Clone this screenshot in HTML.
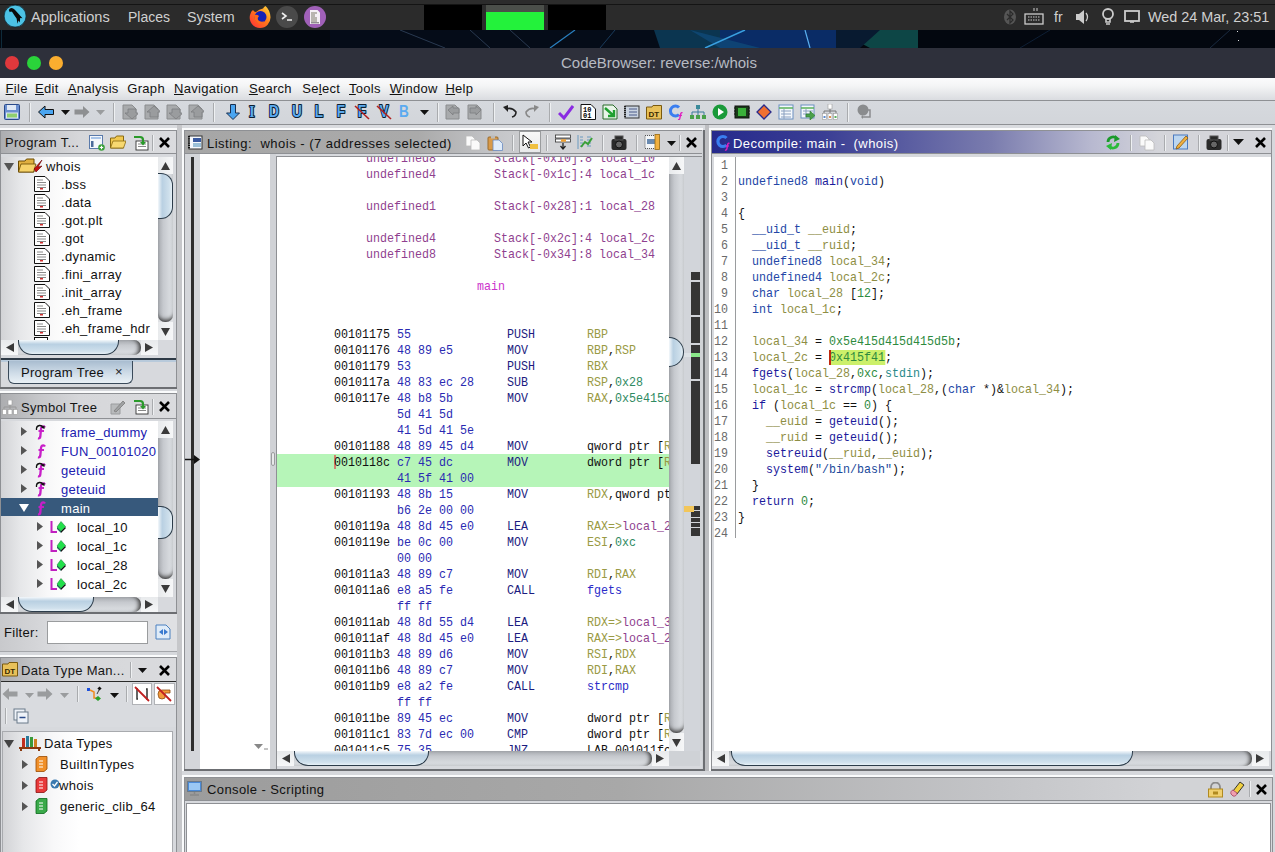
<!DOCTYPE html><html><head><meta charset="utf-8"><style>
*{margin:0;padding:0;box-sizing:border-box}
html,body{width:1275px;height:852px;overflow:hidden;background:#d6d8dc;font-family:"Liberation Sans",sans-serif}
div{position:absolute}
.t{white-space:pre;line-height:16px}
.ui{font-size:13px;letter-spacing:0.3px;color:#000}
.m{font-family:"Liberation Mono",monospace;font-size:13.3px;white-space:pre;line-height:16px;transform:scaleX(0.877);transform-origin:0 0}
.mr{transform-origin:100% 0}
svg{position:absolute}
</style></head><body><div style="left:0px;top:0px;width:1275px;height:4px;background:#2c2c2c"></div>
<div style="left:0px;top:4px;width:1275px;height:1px;background:#141414"></div>
<div style="left:0px;top:5px;width:1275px;height:25px;background:#2b2b2b"></div>
<svg style="left:3px;top:4px" width="24" height="24" viewBox="0 0 24 24"><circle cx="12.1" cy="12.1" r="11" fill="#4cc2e4" stroke="#0e2a36" stroke-width="0.8"/><path d="M5.8 6 Q7 3.6 9.5 4.2 Q11 4.6 12.5 6.5 L19.5 14.2 L17.2 14 L16.8 18.5 L15.5 16.5 L14.5 19.8 L13.6 14.5 Q11 11 9.2 8 Q8 7 6.8 8.2Z" fill="#0a0a0a"/></svg>
<div class="t" style="left:31px;top:9px;font-size:14.6px;color:#d0d0d0;line-height:16px">Applications</div>
<div class="t" style="left:128px;top:9px;font-size:14px;color:#d0d0d0;line-height:16px">Places</div>
<div class="t" style="left:187px;top:9px;font-size:14.3px;color:#d0d0d0;line-height:16px">System</div>
<svg style="left:248px;top:5px" width="24" height="24" viewBox="0 0 24 24"><defs><linearGradient id="ff" x1="0" y1="1" x2="1" y2="0"><stop offset="0" stop-color="#ff2a3a"/><stop offset="0.55" stop-color="#ff7a1a"/><stop offset="1" stop-color="#ffe040"/></linearGradient></defs><path d="M12 23 A10.5 10.5 0 0 1 2 10 Q3 6 5 5 Q6 7 8 7 Q11 4 15 3.5 Q16 1.5 17.5 1 Q22 5 22.5 12 A10.5 10.5 0 0 1 12 23Z" fill="url(#ff)"/><circle cx="12.5" cy="12" r="6" fill="#1420b8"/><path d="M6 10 Q9 9 11 11 Q9 13 10 15 Q13 18 17 16 Q14 20 10 18 Q6 16 6 10Z" fill="#ff6a1a"/></svg>
<svg style="left:275px;top:5px" width="24" height="24" viewBox="0 0 24 24"><circle cx="12" cy="12" r="11" fill="#4a4a4a"/><path d="M7 8 L11 11 L7 14" stroke="#eee" stroke-width="1.6" fill="none"/><path d="M12 15 H17" stroke="#eee" stroke-width="1.5"/></svg>
<svg style="left:303px;top:5px" width="24" height="24" viewBox="0 0 24 24"><circle cx="12" cy="12" r="11" fill="#a060b8"/><path d="M7 5H14.5L17 7.5V19H7Z" fill="#f4eef6"/><rect x="8" y="7" width="6" height="10" fill="#b8b4b0"/><rect x="12" y="9" width="3" height="3" fill="#f4eef6"/><path d="M8 17.8H16" stroke="#555" stroke-width="0.9"/></svg>
<div style="left:424px;top:5px;width:58px;height:25px;background:#000"></div>
<div style="left:486px;top:5px;width:58px;height:7px;background:#4b4f4a"></div>
<div style="left:486px;top:12px;width:58px;height:18px;background:#23f23b"></div>
<div style="left:548px;top:5px;width:58px;height:25px;background:#000"></div>
<svg style="left:1003px;top:9px" width="14" height="16" viewBox="0 0 14 16"><ellipse cx="7" cy="8" rx="6" ry="7.5" fill="#555"/><path d="M4 5 L10 11 L7 14 V2 L10 5 L4 11" stroke="#2b2b2b" stroke-width="1.2" fill="none"/></svg>
<svg style="left:1024px;top:8px" width="20" height="18" viewBox="0 0 20 18"><path d="M10 0 V3 M13 0 V3" stroke="#ccc"/><rect x="1" y="6" width="18" height="10" fill="none" stroke="#ccc" stroke-width="1.3"/><path d="M4 9H16M4 12H16" stroke="#ccc" stroke-dasharray="1.5 1"/></svg>
<div class="t" style="left:1054px;top:9px;font-size:14px;color:#d0d0d0;line-height:16px">fr</div>
<svg style="left:1075px;top:9px" width="16" height="16" viewBox="0 0 16 16"><path d="M1 5H4L9 1V15L4 11H1Z" fill="#ccc"/><path d="M11 4 Q14 8 11 12" stroke="#ccc" stroke-width="1.3" fill="none"/></svg>
<svg style="left:1101px;top:8px" width="14" height="18" viewBox="0 0 14 18"><circle cx="7" cy="6" r="5" fill="none" stroke="#ccc" stroke-width="1.8"/><path d="M5 11 V14 H9 V11 M5 16 H9" stroke="#ccc" stroke-width="1.6" fill="none"/></svg>
<svg style="left:1124px;top:9px" width="16" height="16" viewBox="0 0 16 16"><rect x="1" y="2" width="14" height="10" fill="none" stroke="#ccc" stroke-width="1.8"/><path d="M6 13 H10" stroke="#ccc" stroke-width="1.6"/></svg>
<div class="t" style="left:1148px;top:9px;font-size:14.4px;color:#d0d0d0;line-height:16px">Wed 24 Mar, 23:51</div>
<div style="left:0px;top:30px;width:1275px;height:18px;background:#040b16"></div>
<svg style="left:0;top:30px" width="1275" height="18" viewBox="0 0 1275 18">
<rect x="0" y="0" width="1275" height="18" fill="#03070f"/>
<rect x="330" y="0" width="330" height="18" fill="#050c18"/>
<path d="M400 0 L445 18 M470 0 L490 18 M510 0 L530 18" stroke="#2a3a50" stroke-width="1"/>
<path d="M550 18 L575 0" stroke="#2a80c0" stroke-width="1.2"/>
<path d="M600 18 L615 0" stroke="#1a3a5a" stroke-width="1"/>
<polygon points="654,0 720,0 720,18 660,18" fill="#0b3550"/>
<polygon points="720,0 836,0 836,18 720,18" fill="#0a2c66"/>
<polygon points="690,0 760,18 720,18" fill="#0f4a78" opacity="0.8"/>
<path d="M705 18 L745 0" stroke="#3aa0e0" stroke-width="1.5"/>
<path d="M805 0 L810 18" stroke="#5ab0f0" stroke-width="1.2"/>
<polygon points="836,0 918,0 918,18 870,18" fill="#0d4646"/>
<polygon points="836,0 880,0 860,18 836,18" fill="#081a30"/>
<rect x="1" y="0" width="1" height="18" fill="#0e2a3a"/>
<path d="M1210 18 L1230 0" stroke="#1a2a40" stroke-width="1"/>
<path d="M1020 18 L1050 0" stroke="#0e1e34" stroke-width="1"/>
</svg>
<div style="left:1237px;top:31px;width:1px;height:1px;background:#ddd"></div>
<div style="left:1238px;top:40px;width:1px;height:1px;background:#ddd"></div>
<div style="left:0px;top:48px;width:1275px;height:30px;background:#2e303b"></div>
<svg style="left:0;top:48px" width="80" height="29" viewBox="0 0 80 29"><circle cx="12" cy="15" r="7" fill="#e0383c"/><circle cx="34" cy="15" r="7" fill="#2ad33a"/><circle cx="56" cy="15" r="7" fill="#fbae2f"/></svg>
<div class="t" style="left:561px;top:55px;font-size:15px;color:#b6bac2;line-height:16px">CodeBrowser: reverse:/whois</div>
<div style="left:0px;top:78px;width:1275px;height:22px;background:linear-gradient(#fbfbfc,#f4f5f6 35%,#dadce0)"></div>
<div style="left:0px;top:100px;width:1275px;height:1px;background:#8e9094"></div>
<div class="t" style="left:5.6px;top:81px;font-size:13px;letter-spacing:0.3px;color:#111;line-height:16px"><u>F</u>ile</div>
<div class="t" style="left:35px;top:81px;font-size:13px;letter-spacing:0.3px;color:#111;line-height:16px"><u>E</u>dit</div>
<div class="t" style="left:67.8px;top:81px;font-size:13px;letter-spacing:0.3px;color:#111;line-height:16px"><u>A</u>nalysis</div>
<div class="t" style="left:127.3px;top:81px;font-size:13px;letter-spacing:0.3px;color:#111;line-height:16px">Graph</div>
<div class="t" style="left:174px;top:81px;font-size:13px;letter-spacing:0.3px;color:#111;line-height:16px"><u>N</u>avigation</div>
<div class="t" style="left:248.9px;top:81px;font-size:13px;letter-spacing:0.3px;color:#111;line-height:16px"><u>S</u>earch</div>
<div class="t" style="left:302.3px;top:81px;font-size:13px;letter-spacing:0.3px;color:#111;line-height:16px">Se<u>l</u>ect</div>
<div class="t" style="left:349px;top:81px;font-size:13px;letter-spacing:0.3px;color:#111;line-height:16px"><u>T</u>ools</div>
<div class="t" style="left:389.7px;top:81px;font-size:13px;letter-spacing:0.3px;color:#111;line-height:16px"><u>W</u>indow</div>
<div class="t" style="left:445.4px;top:81px;font-size:13px;letter-spacing:0.3px;color:#111;line-height:16px"><u>H</u>elp</div>
<div style="left:0px;top:101px;width:1275px;height:23px;background:linear-gradient(#d6d9de,#d2d5da)"></div>
<div style="left:0px;top:124px;width:1275px;height:1px;background:#8e9094"></div>
<div style="left:0px;top:125px;width:1275px;height:5px;background:#d9dbdf"></div>
<svg style="left:4px;top:104px" width="16" height="16" viewBox="0 0 16 16"><rect x="0.5" y="0.5" width="15" height="15" rx="1" fill="#6a8fd0" stroke="#2a4a8a"/><rect x="3" y="1" width="9" height="5" fill="#dfe8f5"/><rect x="2.5" y="9" width="11" height="5" fill="#8fcf6f" stroke="#dfe8f5"/></svg>
<div style="left:29px;top:103px;width:1px;height:19px;background:#a9abae"></div>
<div style="left:30px;top:103px;width:1px;height:19px;background:#eef0f2"></div>
<svg style="left:38px;top:104px" width="16" height="16" viewBox="0 0 16 16"><path d="M0.5 8 L7 2 V5.5 H15.5 V10.5 H7 V14Z" fill="#4aa5f0" stroke="#111" stroke-width="1"/></svg>
<svg style="left:61px;top:110px" width="9" height="5" viewBox="0 0 9 5"><path d="M0 0H9L4.5 5Z" fill="#111"/></svg>
<svg style="left:74px;top:104px" width="16" height="16" viewBox="0 0 16 16"><path d="M15.5 8 L9 2 V5.5 H0.5 V10.5 H9 V14Z" fill="#8e9092"/></svg>
<svg style="left:96px;top:110px" width="9" height="5" viewBox="0 0 9 5"><path d="M0 0H9L4.5 5Z" fill="#9a9c9e"/></svg>
<div style="left:113px;top:103px;width:1px;height:19px;background:#a9abae"></div>
<div style="left:114px;top:103px;width:1px;height:19px;background:#eef0f2"></div>
<svg style="left:122px;top:104px" width="16" height="16" viewBox="0 0 16 16"><path d="M1 1H10L14 5V15H1Z" fill="#a8aaac" stroke="#8a8c8e"/><path d="M8 15 L15 9 H12 V5 H4 V9 H1Z" fill="#9a9c9e" stroke="#7c7e80" stroke-width="0.8" transform="translate(2,0)"/></svg>
<svg style="left:144px;top:104px" width="16" height="16" viewBox="0 0 16 16"><path d="M1 1H10L14 5V15H1Z" fill="#a8aaac" stroke="#8a8c8e"/><path d="M8 2 L15 8 H12 V13 H4 V8 H1Z" fill="#9a9c9e" stroke="#7c7e80" stroke-width="0.8" transform="translate(2,0)"/></svg>
<svg style="left:166px;top:104px" width="16" height="16" viewBox="0 0 16 16"><path d="M1 1H10L14 5V15H1Z" fill="#a8aaac" stroke="#8a8c8e"/><path d="M8 15 L15 9 H12 V5 H4 V9 H1Z" fill="#9a9c9e" stroke="#7c7e80" stroke-width="0.8" transform="translate(2,0)"/></svg>
<svg style="left:188px;top:104px" width="16" height="16" viewBox="0 0 16 16"><path d="M1 1H10L14 5V15H1Z" fill="#a8aaac" stroke="#8a8c8e"/><path d="M8 2 L15 8 H12 V13 H4 V8 H1Z" fill="#9a9c9e" stroke="#7c7e80" stroke-width="0.8" transform="translate(2,0)"/></svg>
<div style="left:213px;top:103px;width:1px;height:19px;background:#a9abae"></div>
<div style="left:214px;top:103px;width:1px;height:19px;background:#eef0f2"></div>
<svg style="left:225px;top:104px" width="16" height="16" viewBox="0 0 16 16"><path d="M5.5 0.5H10.5V9H14.5L8 15.5L1.5 9H5.5Z" fill="#4aa5f0" stroke="#1a3050" stroke-width="1"/></svg>
<svg style="left:244px;top:103px" width="16" height="18" viewBox="0 0 16 18"><g transform="translate(8 0) scale(0.85 1)"><text x="0" y="14.5" text-anchor="middle" font-family="Liberation Serif" font-weight="bold" font-size="16" fill="#5aaaf0" stroke="#0e1e30" stroke-width="2.2" paint-order="stroke" stroke-linejoin="round">I</text></g></svg>
<svg style="left:266px;top:103px" width="16" height="18" viewBox="0 0 16 18"><g transform="translate(8 0) scale(0.85 1)"><text x="0" y="14.5" text-anchor="middle" font-family="Liberation Sans" font-weight="bold" font-size="16" fill="#5aaaf0" stroke="#0e1e30" stroke-width="2.2" paint-order="stroke" stroke-linejoin="round">D</text></g></svg>
<svg style="left:289px;top:103px" width="16" height="18" viewBox="0 0 16 18"><g transform="translate(8 0) scale(0.85 1)"><text x="0" y="14.5" text-anchor="middle" font-family="Liberation Sans" font-weight="bold" font-size="16" fill="#5aaaf0" stroke="#0e1e30" stroke-width="2.2" paint-order="stroke" stroke-linejoin="round">U</text></g></svg>
<svg style="left:311px;top:103px" width="16" height="18" viewBox="0 0 16 18"><g transform="translate(8 0) scale(0.85 1)"><text x="0" y="14.5" text-anchor="middle" font-family="Liberation Sans" font-weight="bold" font-size="16" fill="#5aaaf0" stroke="#0e1e30" stroke-width="2.2" paint-order="stroke" stroke-linejoin="round">L</text></g></svg>
<svg style="left:333px;top:103px" width="16" height="18" viewBox="0 0 16 18"><g transform="translate(8 0) scale(0.85 1)"><text x="0" y="14.5" text-anchor="middle" font-family="Liberation Sans" font-weight="bold" font-size="16" fill="#5aaaf0" stroke="#0e1e30" stroke-width="2.2" paint-order="stroke" stroke-linejoin="round">F</text></g></svg>
<svg style="left:354px;top:103px" width="16" height="18" viewBox="0 0 16 18"><g transform="translate(8 0) scale(0.85 1)"><text x="0" y="14.5" text-anchor="middle" font-family="Liberation Sans" font-weight="bold" font-size="16" fill="#5aaaf0" stroke="#0e1e30" stroke-width="2.2" paint-order="stroke" stroke-linejoin="round">F</text></g></svg>
<svg style="left:376px;top:103px" width="16" height="18" viewBox="0 0 16 18"><g transform="translate(8 0) scale(0.85 1)"><text x="0" y="14.5" text-anchor="middle" font-family="Liberation Sans" font-weight="bold" font-size="16" fill="#5aaaf0" stroke="#0e1e30" stroke-width="2.2" paint-order="stroke" stroke-linejoin="round">V</text></g></svg>
<svg style="left:354px;top:104px" width="16" height="16" viewBox="0 0 16 16"><path d="M1 2 L15 15" stroke="#b02020" stroke-width="1.6"/></svg>
<svg style="left:376px;top:104px" width="16" height="16" viewBox="0 0 16 16"><path d="M1 2 L15 15" stroke="#b02020" stroke-width="1.6"/></svg>
<svg style="left:396px;top:103px" width="16" height="18" viewBox="0 0 16 18"><g transform="translate(8 0) scale(0.85 1)"><text x="0" y="14.5" text-anchor="middle" font-family="Liberation Sans" font-weight="bold" font-size="16" fill="#5aaaf0" >B</text></g></svg>
<svg style="left:420px;top:110px" width="9" height="5" viewBox="0 0 9 5"><path d="M0 0H9L4.5 5Z" fill="#111"/></svg>
<div style="left:437px;top:103px;width:1px;height:19px;background:#a9abae"></div>
<div style="left:438px;top:103px;width:1px;height:19px;background:#eef0f2"></div>
<svg style="left:445px;top:104px" width="16" height="16" viewBox="0 0 16 16"><path d="M1 1H10L14 5V15H1Z" fill="#a8aaac" stroke="#8a8c8e"/><path d="M3 6 L8 2 V4 H14 V9 H8 V11Z" fill="#9a9c9e" stroke="#7c7e80" stroke-width="0.8"/></svg>
<svg style="left:467px;top:104px" width="16" height="16" viewBox="0 0 16 16"><path d="M1 1H10L14 5V15H1Z" fill="#a8aaac" stroke="#8a8c8e"/><path d="M14 6 L9 2 V4 H3 V9 H9 V11Z" fill="#9a9c9e" stroke="#7c7e80" stroke-width="0.8"/></svg>
<div style="left:493px;top:103px;width:1px;height:19px;background:#a9abae"></div>
<div style="left:494px;top:103px;width:1px;height:19px;background:#eef0f2"></div>
<svg style="left:502px;top:104px" width="16" height="16" viewBox="0 0 16 16"><path d="M4 5 Q10 3 14 8 Q14 12 10 13" stroke="#222" stroke-width="1.6" fill="none"/><path d="M1 3 L6 1 L6 8Z" fill="#222"/></svg>
<svg style="left:524px;top:104px" width="16" height="16" viewBox="0 0 16 16"><path d="M12 5 Q6 3 2 8 Q2 12 6 13" stroke="#888" stroke-width="1.6" fill="none"/><path d="M15 3 L10 1 L10 8Z" fill="#888"/></svg>
<div style="left:549px;top:103px;width:1px;height:19px;background:#a9abae"></div>
<div style="left:550px;top:103px;width:1px;height:19px;background:#eef0f2"></div>
<svg style="left:558px;top:104px" width="16" height="16" viewBox="0 0 16 16"><path d="M1 9 L6 14 L15 2" stroke="#8a2be2" stroke-width="3" fill="none"/></svg>
<svg style="left:580px;top:104px" width="16" height="16" viewBox="0 0 16 16"><path d="M1 0.5H11L15.5 5V15.5H1Z" fill="#fff" stroke="#111"/><text x="3" y="8" font-size="7" font-family="Liberation Mono" font-weight="bold">10</text><text x="3" y="14" font-size="7" font-family="Liberation Mono" font-weight="bold">01</text></svg>
<svg style="left:602px;top:104px" width="16" height="16" viewBox="0 0 16 16"><path d="M1 1H11L15 5V15H1Z" fill="#e8f4e8" stroke="#2a6a2a"/><path d="M3 4 L12 12 M12 6 V12 H6" stroke="#1fa02f" stroke-width="2.4" fill="none"/></svg>
<svg style="left:624px;top:104px" width="16" height="16" viewBox="0 0 16 16"><rect x="1" y="2" width="14" height="12" fill="#c9d3e0" stroke="#333"/><path d="M1 2V14" stroke="#222" stroke-width="2" stroke-dasharray="1 1"/><path d="M5 5H13M5 8H13M5 11H13" stroke="#4a5a8a"/></svg>
<svg style="left:646px;top:104px" width="16" height="16" viewBox="0 0 16 16"><path d="M0.5 3H6L7 1.5H15.5V15H0.5Z" fill="#e8c15a" stroke="#7a5a10"/><text x="2.5" y="12.5" font-size="8" font-family="Liberation Sans" font-weight="bold" fill="#3a2a00">DT</text></svg>
<svg style="left:668px;top:104px" width="16" height="16" viewBox="0 0 16 16"><path d="M11 3.5 A5 5 0 1 0 11 10.5" stroke="#3a7ef0" stroke-width="3" fill="none"/><path d="M14.5 9 Q13.5 8 12.8 9.5 L11.8 14.5 Q11.3 16 10 15.5" stroke="#e020c0" stroke-width="1.4" fill="none"/><path d="M10.5 11.5H14" stroke="#e020c0" stroke-width="1.1"/></svg>
<svg style="left:690px;top:104px" width="16" height="16" viewBox="0 0 16 16"><rect x="6" y="1" width="4" height="4" fill="#3a8a9a"/><path d="M8 5V8M2 8H14M2 8V11M8 8V11M14 8V11" stroke="#3a7a9a"/><rect x="0" y="11" width="4" height="4" fill="#4aa04a"/><rect x="6" y="11" width="4" height="4" fill="#4aa04a"/><rect x="12" y="11" width="4" height="4" fill="#4aa04a"/></svg>
<svg style="left:712px;top:104px" width="16" height="16" viewBox="0 0 16 16"><circle cx="8" cy="8" r="7.5" fill="#1a9a3a"/><path d="M6 4 L12 8 L6 12Z" fill="#fff"/></svg>
<svg style="left:734px;top:104px" width="16" height="16" viewBox="0 0 16 16"><rect x="1" y="2" width="14" height="12" fill="#1a3a1a" stroke="#111"/><rect x="4" y="4" width="8" height="8" fill="#3ab03a"/><path d="M1 4H0M1 7H0M1 10H0M15 4H16M15 7H16M15 10H16" stroke="#111"/></svg>
<svg style="left:756px;top:104px" width="16" height="16" viewBox="0 0 16 16"><path d="M8 1 L15 8 L8 15 L1 8Z" fill="#f07030" stroke="#2a2a8a" stroke-width="1.3"/></svg>
<svg style="left:778px;top:104px" width="16" height="16" viewBox="0 0 16 16"><rect x="1" y="1" width="14" height="14" fill="#f4f8fc" stroke="#6a8fc0"/><path d="M1 4H15" stroke="#5ab05a" stroke-width="1.5"/><path d="M3 7H13M3 10H13M3 13H13M6 5V15" stroke="#8aa0c0"/></svg>
<svg style="left:800px;top:104px" width="16" height="16" viewBox="0 0 16 16"><rect x="1" y="1" width="13" height="13" fill="#f4f8fc" stroke="#6a8fc0"/><path d="M1 4H14" stroke="#5ab05a" stroke-width="1.5"/><path d="M3 7H13M3 10H13M6 5V14" stroke="#8aa0c0"/><path d="M6 10H10V7L15 11.5L10 16V13H6Z" fill="#4aa04a" stroke="#2a7a2a" stroke-width="0.6"/></svg>
<svg style="left:822px;top:104px" width="16" height="16" viewBox="0 0 16 16"><rect x="6" y="0" width="4" height="5" fill="#fff" stroke="#999" stroke-width="0.6"/><path d="M8 5V7M2 7H14M2 7V9M8 7V9M14 7V9" stroke="#777"/><rect x="0.5" y="9.5" width="4" height="6" fill="#fff" stroke="#999" stroke-width="0.6"/><rect x="6" y="9.5" width="4" height="6" fill="#fff" stroke="#999" stroke-width="0.6"/><rect x="11.5" y="9.5" width="4" height="6" fill="#fff" stroke="#999" stroke-width="0.6"/><rect x="1.5" y="12" width="2" height="2" fill="#5a8ad0"/><rect x="7" y="12" width="2" height="2" fill="#e09050"/><rect x="12.5" y="12" width="2" height="2" fill="#5ab05a"/></svg>
<div style="left:847px;top:103px;width:1px;height:19px;background:#a9abae"></div>
<div style="left:848px;top:103px;width:1px;height:19px;background:#eef0f2"></div>
<svg style="left:856px;top:104px" width="16" height="16" viewBox="0 0 16 16"><circle cx="7" cy="6" r="5.5" fill="#8a8c8e"/><path d="M11 6H14V13H6" stroke="#8a8c8e" stroke-width="1.5" fill="none"/><path d="M7 11L5 13L7 15" fill="#8a8c8e"/></svg>
<div style="left:177px;top:125px;width:5px;height:727px;background:#c6c7ca"></div>
<div style="left:705px;top:125px;width:4px;height:646px;background:#bdbec1"></div>
<div style="left:-2px;top:128px;width:179px;height:2px;background:#fafbfc"></div>
<div style="left:0px;top:130px;width:177px;height:258px;background:#d7d9dd;border:1px solid #8e9094"></div>
<div style="left:1px;top:131px;width:175px;height:22px;background:linear-gradient(90deg,#acadb0,#c6c7ca 22%,#d6d7da 45%,#dadbde)"></div>
<div style="left:1px;top:153px;width:175px;height:1px;background:#8e9094"></div>
<div class="t" style="left:5px;top:135px;font-size:13px;letter-spacing:0.3px;color:#151515">Program T...</div>
<svg style="left:89px;top:135px" width="16" height="16" viewBox="0 0 16 16"><rect x="0.5" y="0.5" width="13" height="13" fill="#f4f7fb" stroke="#5a7aaa"/><rect x="2" y="2" width="10" height="2" fill="#a8c4e8"/><rect x="2" y="6" width="2.5" height="6" fill="#4a6a9a"/><circle cx="12.5" cy="12.5" r="3.3" fill="#3aa03a"/><path d="M10.8 12.5H14.2M12.5 10.8V14.2" stroke="#fff" stroke-width="1.2"/></svg>
<svg style="left:110px;top:135px" width="16" height="16" viewBox="0 0 16 16"><path d="M0.5 3H5L6.5 1H13.5V13H0.5Z" fill="#f0c850" stroke="#8a6a10"/><path d="M0.5 13L3 6H16L13.5 13Z" fill="#f7d870" stroke="#8a6a10" stroke-width="0.8"/></svg>
<svg style="left:133px;top:135px" width="16" height="16" viewBox="0 0 16 16"><rect x="3" y="6" width="12" height="9" fill="#fff" stroke="#333" stroke-width="0.9"/><path d="M5 9H13M5 11.5H13" stroke="#555" stroke-width="0.7"/><path d="M1 2 H7 Q10 2 10 5 V8" stroke="#2a9a2a" stroke-width="2.2" fill="none"/><path d="M7 7 L10 10.5 L13 7Z" fill="#2a9a2a"/></svg>
<div style="left:152px;top:135px;width:1px;height:16px;background:#a9abae"></div>
<div style="left:153px;top:135px;width:1px;height:16px;background:#eef0f2"></div>
<svg style="left:159px;top:137px" width="11" height="11" viewBox="0 0 11 11"><path d="M1 1L10 10M10 1L1 10" stroke="#000" stroke-width="2.6" stroke-linecap="butt"/></svg>
<div style="left:1px;top:154px;width:175px;height:3px;background:#d7d9dd"></div>
<div style="left:1px;top:157px;width:157px;height:183px;background:linear-gradient(90deg,#d2d3d6,#e6e7e9 12%,#f8f8f9 30%,#fff 45%)"></div>
<div style="left:158px;top:157px;width:15px;height:183px;background:#dfe1e4"></div>
<div style="left:158px;top:172px;width:15px;height:150px;background:linear-gradient(90deg,#a6a9ae,#c6c9ce 35%,#d6d9dd 75%,#d2d5d9);border-radius:0 0 7px 7px;box-shadow:inset 0 -5px 4px -3px #3a3a3a"></div>
<div style="left:158px;top:157px;width:15px;height:17px;background:linear-gradient(90deg,#e8eaec,#f6f7f8)"></div>
<svg style="left:161px;top:162px" width="9" height="8" viewBox="0 0 9 8"><path d="M0 8H9L4.5 0Z" fill="#3a3a3a"/></svg>
<div style="left:158px;top:322px;width:15px;height:18px;background:linear-gradient(90deg,#e8eaec,#f6f7f8)"></div>
<svg style="left:161px;top:328px" width="9" height="8" viewBox="0 0 9 8"><path d="M0 0H9L4.5 8Z" fill="#3a3a3a"/></svg>
<div style="left:158px;top:173px;width:15px;height:46px;background:linear-gradient(90deg,#f4f8fb,#b9d0e2 30%,#cfe0ec 80%,#e6f0f6);border:1.5px solid #2c3c4a;border-left:none;border-radius:0 12px 12px 0"></div>
<svg style="left:18px;top:157px" width="25" height="16" viewBox="0 0 25 16"><path d="M0.5 4H7L8.5 2H16V15H0.5Z" fill="#e0b040" stroke="#6a4a00"/><path d="M0.5 15L3 7H18L15.5 15Z" fill="#f6d36a" stroke="#6a4a00" stroke-width="0.8"/><path d="M16 12 L24 3 L20 10 L24 9 L18 15Z" fill="#c01010" stroke="#600" stroke-width="0.6"/></svg>
<svg style="left:4px;top:163px" width="10" height="8" viewBox="0 0 10 8"><path d="M0 0H10L5 8Z" fill="#555"/></svg>
<div class="t" style="left:46px;top:159px;font-size:13px;letter-spacing:0.3px;color:#111">whois</div>
<svg style="left:34px;top:176px" width="16" height="16" viewBox="0 0 16 16"><path d="M0.5 0.5H11L15.5 5V15.5H0.5Z" fill="#fff" stroke="#111"/><path d="M3 4H9M3 6.5H12M3 9H12M3 11.5H12" stroke="#8a8a8a" stroke-width="1"/><rect x="6" y="12" width="3" height="1.5" fill="#d03030"/></svg>
<div class="t" style="left:61px;top:177px;font-size:13px;letter-spacing:0.35px;color:#111">.bss</div>
<svg style="left:34px;top:194px" width="16" height="16" viewBox="0 0 16 16"><path d="M0.5 0.5H11L15.5 5V15.5H0.5Z" fill="#fff" stroke="#111"/><path d="M3 4H9M3 6.5H12M3 9H12M3 11.5H12" stroke="#8a8a8a" stroke-width="1"/><rect x="6" y="12" width="3" height="1.5" fill="#d03030"/></svg>
<div class="t" style="left:61px;top:195px;font-size:13px;letter-spacing:0.35px;color:#111">.data</div>
<svg style="left:34px;top:212px" width="16" height="16" viewBox="0 0 16 16"><path d="M0.5 0.5H11L15.5 5V15.5H0.5Z" fill="#fff" stroke="#111"/><path d="M3 4H9M3 6.5H12M3 9H12M3 11.5H12" stroke="#8a8a8a" stroke-width="1"/><rect x="6" y="12" width="3" height="1.5" fill="#d03030"/></svg>
<div class="t" style="left:61px;top:213px;font-size:13px;letter-spacing:0.35px;color:#111">.got.plt</div>
<svg style="left:34px;top:230px" width="16" height="16" viewBox="0 0 16 16"><path d="M0.5 0.5H11L15.5 5V15.5H0.5Z" fill="#fff" stroke="#111"/><path d="M3 4H9M3 6.5H12M3 9H12M3 11.5H12" stroke="#8a8a8a" stroke-width="1"/><rect x="6" y="12" width="3" height="1.5" fill="#d03030"/></svg>
<div class="t" style="left:61px;top:231px;font-size:13px;letter-spacing:0.35px;color:#111">.got</div>
<svg style="left:34px;top:248px" width="16" height="16" viewBox="0 0 16 16"><path d="M0.5 0.5H11L15.5 5V15.5H0.5Z" fill="#fff" stroke="#111"/><path d="M3 4H9M3 6.5H12M3 9H12M3 11.5H12" stroke="#8a8a8a" stroke-width="1"/><rect x="6" y="12" width="3" height="1.5" fill="#d03030"/></svg>
<div class="t" style="left:61px;top:249px;font-size:13px;letter-spacing:0.35px;color:#111">.dynamic</div>
<svg style="left:34px;top:266px" width="16" height="16" viewBox="0 0 16 16"><path d="M0.5 0.5H11L15.5 5V15.5H0.5Z" fill="#fff" stroke="#111"/><path d="M3 4H9M3 6.5H12M3 9H12M3 11.5H12" stroke="#8a8a8a" stroke-width="1"/><rect x="6" y="12" width="3" height="1.5" fill="#d03030"/></svg>
<div class="t" style="left:61px;top:267px;font-size:13px;letter-spacing:0.35px;color:#111">.fini_array</div>
<svg style="left:34px;top:284px" width="16" height="16" viewBox="0 0 16 16"><path d="M0.5 0.5H11L15.5 5V15.5H0.5Z" fill="#fff" stroke="#111"/><path d="M3 4H9M3 6.5H12M3 9H12M3 11.5H12" stroke="#8a8a8a" stroke-width="1"/><rect x="6" y="12" width="3" height="1.5" fill="#d03030"/></svg>
<div class="t" style="left:61px;top:285px;font-size:13px;letter-spacing:0.35px;color:#111">.init_array</div>
<svg style="left:34px;top:302px" width="16" height="16" viewBox="0 0 16 16"><path d="M0.5 0.5H11L15.5 5V15.5H0.5Z" fill="#fff" stroke="#111"/><path d="M3 4H9M3 6.5H12M3 9H12M3 11.5H12" stroke="#8a8a8a" stroke-width="1"/><rect x="6" y="12" width="3" height="1.5" fill="#d03030"/></svg>
<div class="t" style="left:61px;top:303px;font-size:13px;letter-spacing:0.35px;color:#111">.eh_frame</div>
<svg style="left:34px;top:320px" width="16" height="16" viewBox="0 0 16 16"><path d="M0.5 0.5H11L15.5 5V15.5H0.5Z" fill="#fff" stroke="#111"/><path d="M3 4H9M3 6.5H12M3 9H12M3 11.5H12" stroke="#8a8a8a" stroke-width="1"/><rect x="6" y="12" width="3" height="1.5" fill="#d03030"/></svg>
<div class="t" style="left:61px;top:321px;font-size:13px;letter-spacing:0.35px;color:#111">.eh_frame_hdr</div>
<div style="left:34px;top:337px;width:14px;height:3px;background:#fff;border:1px solid #111;border-bottom:none"></div>
<div style="left:1px;top:340px;width:157px;height:0px;"></div>
<div style="left:1px;top:340px;width:157px;height:15px;background:#dfe1e4"></div>
<div style="left:18px;top:340px;width:123px;height:15px;background:linear-gradient(#a6a9ae,#c6c9ce 35%,#d6d9dd 75%,#d2d5d9);border-radius:0 7px 7px 0;box-shadow:inset -5px 0 4px -3px #3a3a3a"></div>
<div style="left:1px;top:340px;width:17px;height:15px;background:linear-gradient(#e8eaec,#f6f7f8)"></div>
<svg style="left:6px;top:343px" width="8" height="9" viewBox="0 0 8 9"><path d="M8 0V9L0 4.5Z" fill="#3a3a3a"/></svg>
<div style="left:141px;top:340px;width:17px;height:15px;background:linear-gradient(#e8eaec,#f6f7f8)"></div>
<svg style="left:145px;top:343px" width="8" height="9" viewBox="0 0 8 9"><path d="M0 0V9L8 4.5Z" fill="#3a3a3a"/></svg>
<div style="left:18px;top:340px;width:101px;height:15px;background:linear-gradient(#f4f8fb,#b9d0e2 30%,#cfe0ec 80%,#e6f0f6);border:1.5px solid #2c3c4a;border-top:none;border-radius:0 0 14px 14px"></div>
<div style="left:158px;top:340px;width:15px;height:15px;background:#d7d9dd"></div>
<div style="left:1px;top:355px;width:175px;height:33px;background:#d7d9dd"></div>
<div style="left:0px;top:387px;width:177px;height:2px;background:#6c6e72"></div>
<div style="left:1px;top:358px;width:175px;height:2px;background:#2e3a46"></div>
<div style="left:1px;top:360px;width:175px;height:2px;background:#b8cadb"></div>
<div style="left:8px;top:361px;width:125px;height:23px;background:linear-gradient(#a9bdd0,#cfdce8 55%,#eaf1f6);border:1px solid #3a4a5a;border-top:none;border-radius:0 0 6px 6px"></div>
<div class="t" style="left:21px;top:365px;font-size:13px;letter-spacing:0.3px;color:#111">Program Tree</div>
<div class="t" style="left:115px;top:364px;font-size:13px;color:#222">×</div>
<div style="left:-2px;top:391px;width:179px;height:2px;background:#fafbfc"></div>
<div style="left:0px;top:393px;width:177px;height:221px;background:#d7d9dd;border:1px solid #8e9094"></div>
<div style="left:1px;top:394px;width:175px;height:24px;background:linear-gradient(90deg,#acadb0,#c6c7ca 22%,#d6d7da 45%,#dadbde)"></div>
<div style="left:1px;top:418px;width:175px;height:1px;background:#8e9094"></div>
<svg style="left:2px;top:400px" width="16" height="16" viewBox="0 0 16 16"><rect x="6" y="0" width="4" height="5" fill="#fff" stroke="#999" stroke-width="0.6"/><path d="M8 5V7M2 7H14M2 7V9M8 7V9M14 7V9" stroke="#999"/><rect x="0.5" y="9.5" width="4" height="5" fill="#fff" stroke="#999" stroke-width="0.6"/><rect x="6" y="9.5" width="4" height="5" fill="#fff" stroke="#999" stroke-width="0.6"/><rect x="11.5" y="9.5" width="4" height="5" fill="#fff" stroke="#999" stroke-width="0.6"/></svg>
<div class="t" style="left:21px;top:400px;font-size:13px;letter-spacing:0.3px;color:#151515">Symbol Tree</div>
<svg style="left:110px;top:399px" width="16" height="16" viewBox="0 0 16 16"><path d="M1 5H10V15H1Z" fill="#b8babc" stroke="#9a9c9e"/><path d="M4 12 L13 2 L15 4 L6 13Z" fill="#a0a2a4" stroke="#888"/></svg>
<svg style="left:133px;top:399px" width="16" height="16" viewBox="0 0 16 16"><rect x="3" y="6" width="12" height="9" fill="#fff" stroke="#333" stroke-width="0.9"/><path d="M5 9H13M5 11.5H13" stroke="#555" stroke-width="0.7"/><path d="M1 2 H7 Q10 2 10 5 V8" stroke="#2a9a2a" stroke-width="2.2" fill="none"/><path d="M7 7 L10 10.5 L13 7Z" fill="#2a9a2a"/></svg>
<div style="left:152px;top:399px;width:1px;height:16px;background:#a9abae"></div>
<div style="left:153px;top:399px;width:1px;height:16px;background:#eef0f2"></div>
<svg style="left:159px;top:401px" width="11" height="11" viewBox="0 0 11 11"><path d="M1 1L10 10M10 1L1 10" stroke="#000" stroke-width="2.6" stroke-linecap="butt"/></svg>
<div style="left:1px;top:419px;width:175px;height:2px;background:#d7d9dd"></div>
<div style="left:1px;top:421px;width:157px;height:176px;background:linear-gradient(90deg,#d2d3d6,#e6e7e9 12%,#f8f8f9 30%,#fff 45%)"></div>
<div style="left:158px;top:421px;width:15px;height:176px;background:#dfe1e4"></div>
<div style="left:158px;top:436px;width:15px;height:143px;background:linear-gradient(90deg,#a6a9ae,#c6c9ce 35%,#d6d9dd 75%,#d2d5d9);border-radius:0 0 7px 7px;box-shadow:inset 0 -5px 4px -3px #3a3a3a"></div>
<div style="left:158px;top:421px;width:15px;height:17px;background:linear-gradient(90deg,#e8eaec,#f6f7f8)"></div>
<svg style="left:161px;top:426px" width="9" height="8" viewBox="0 0 9 8"><path d="M0 8H9L4.5 0Z" fill="#3a3a3a"/></svg>
<div style="left:158px;top:579px;width:15px;height:18px;background:linear-gradient(90deg,#e8eaec,#f6f7f8)"></div>
<svg style="left:161px;top:585px" width="9" height="8" viewBox="0 0 9 8"><path d="M0 0H9L4.5 8Z" fill="#3a3a3a"/></svg>
<div style="left:158px;top:506px;width:15px;height:33px;background:linear-gradient(90deg,#f4f8fb,#b9d0e2 30%,#cfe0ec 80%,#e6f0f6);border:1.5px solid #2c3c4a;border-left:none;border-radius:0 12px 12px 0"></div>
<svg style="left:21px;top:427px" width="6" height="9" viewBox="0 0 6 9"><path d="M0 0V9L6 4.5Z" fill="#555"/></svg>
<svg style="left:34px;top:424px" width="14" height="16" viewBox="0 0 14 16"><path d="M11 3.5 Q10 1.8 8.3 2.6 Q7.2 3.2 7 5 L6.3 12.5 Q6 14.8 4 14.2" stroke="#c81ec8" stroke-width="2.3" fill="none"/><path d="M4.5 7H10" stroke="#c81ec8" stroke-width="1.9"/><path d="M2.5 6 Q2 2 5.5 1.5 Q8 1.3 9 3.5" stroke="#111" stroke-width="1.3" fill="none"/><path d="M7 3.5 L10.5 5 L10.5 1.5Z" fill="#111"/></svg>
<div class="t" style="left:61px;top:425px;font-size:13px;letter-spacing:0.3px;color:#2020b0">frame_dummy</div>
<svg style="left:21px;top:446px" width="6" height="9" viewBox="0 0 6 9"><path d="M0 0V9L6 4.5Z" fill="#555"/></svg>
<svg style="left:34px;top:443px" width="14" height="16" viewBox="0 0 14 16"><path d="M11 3.5 Q10 1.8 8.3 2.6 Q7.2 3.2 7 5 L6.3 12.5 Q6 14.8 4 14.2" stroke="#c81ec8" stroke-width="2.3" fill="none"/><path d="M4.5 7H10" stroke="#c81ec8" stroke-width="1.9"/></svg>
<div class="t" style="left:61px;top:444px;font-size:13px;letter-spacing:0.3px;color:#2020b0">FUN_00101020</div>
<svg style="left:21px;top:465px" width="6" height="9" viewBox="0 0 6 9"><path d="M0 0V9L6 4.5Z" fill="#555"/></svg>
<svg style="left:34px;top:462px" width="14" height="16" viewBox="0 0 14 16"><path d="M11 3.5 Q10 1.8 8.3 2.6 Q7.2 3.2 7 5 L6.3 12.5 Q6 14.8 4 14.2" stroke="#c81ec8" stroke-width="2.3" fill="none"/><path d="M4.5 7H10" stroke="#c81ec8" stroke-width="1.9"/><path d="M2.5 6 Q2 2 5.5 1.5 Q8 1.3 9 3.5" stroke="#111" stroke-width="1.3" fill="none"/><path d="M7 3.5 L10.5 5 L10.5 1.5Z" fill="#111"/></svg>
<div class="t" style="left:61px;top:463px;font-size:13px;letter-spacing:0.3px;color:#2020b0">geteuid</div>
<svg style="left:21px;top:484px" width="6" height="9" viewBox="0 0 6 9"><path d="M0 0V9L6 4.5Z" fill="#555"/></svg>
<svg style="left:34px;top:481px" width="14" height="16" viewBox="0 0 14 16"><path d="M11 3.5 Q10 1.8 8.3 2.6 Q7.2 3.2 7 5 L6.3 12.5 Q6 14.8 4 14.2" stroke="#c81ec8" stroke-width="2.3" fill="none"/><path d="M4.5 7H10" stroke="#c81ec8" stroke-width="1.9"/><path d="M2.5 6 Q2 2 5.5 1.5 Q8 1.3 9 3.5" stroke="#111" stroke-width="1.3" fill="none"/><path d="M7 3.5 L10.5 5 L10.5 1.5Z" fill="#111"/></svg>
<div class="t" style="left:61px;top:482px;font-size:13px;letter-spacing:0.3px;color:#2020b0">geteuid</div>
<div style="left:1px;top:498px;width:157px;height:18px;background:#37597c"></div>
<svg style="left:19px;top:504px" width="10" height="8" viewBox="0 0 10 8"><path d="M0 0H10L5 8Z" fill="#fff"/></svg>
<svg style="left:34px;top:500px" width="14" height="16" viewBox="0 0 14 16"><path d="M11 3.5 Q10 1.8 8.3 2.6 Q7.2 3.2 7 5 L6.3 12.5 Q6 14.8 4 14.2" stroke="#c81ec8" stroke-width="2.3" fill="none"/><path d="M4.5 7H10" stroke="#c81ec8" stroke-width="1.9"/></svg>
<div class="t" style="left:61px;top:501px;font-size:13px;letter-spacing:0.3px;color:#fff">main</div>
<svg style="left:37px;top:522px" width="6" height="9" viewBox="0 0 6 9"><path d="M0 0V9L6 4.5Z" fill="#555"/></svg>
<svg style="left:50px;top:519px" width="16" height="16" viewBox="0 0 16 16"><path d="M1.5 2V13H7" stroke="#c020c0" stroke-width="2" fill="none"/><path d="M7 8 L7 10 L11 14 L11 12Z" fill="#1a6a5a"/><path d="M15.5 7.5 L15.5 9.5 L11 14 L11 12Z" fill="#111"/><path d="M11 2.5 L15.5 7.5 L11 12 L7 8Z" fill="#22e04a" stroke="#117733" stroke-width="0.5"/></svg>
<div class="t" style="left:77px;top:520px;font-size:13px;letter-spacing:0.3px;color:#111">local_10</div>
<svg style="left:37px;top:541px" width="6" height="9" viewBox="0 0 6 9"><path d="M0 0V9L6 4.5Z" fill="#555"/></svg>
<svg style="left:50px;top:538px" width="16" height="16" viewBox="0 0 16 16"><path d="M1.5 2V13H7" stroke="#c020c0" stroke-width="2" fill="none"/><path d="M7 8 L7 10 L11 14 L11 12Z" fill="#1a6a5a"/><path d="M15.5 7.5 L15.5 9.5 L11 14 L11 12Z" fill="#111"/><path d="M11 2.5 L15.5 7.5 L11 12 L7 8Z" fill="#22e04a" stroke="#117733" stroke-width="0.5"/></svg>
<div class="t" style="left:77px;top:539px;font-size:13px;letter-spacing:0.3px;color:#111">local_1c</div>
<svg style="left:37px;top:560px" width="6" height="9" viewBox="0 0 6 9"><path d="M0 0V9L6 4.5Z" fill="#555"/></svg>
<svg style="left:50px;top:557px" width="16" height="16" viewBox="0 0 16 16"><path d="M1.5 2V13H7" stroke="#c020c0" stroke-width="2" fill="none"/><path d="M7 8 L7 10 L11 14 L11 12Z" fill="#1a6a5a"/><path d="M15.5 7.5 L15.5 9.5 L11 14 L11 12Z" fill="#111"/><path d="M11 2.5 L15.5 7.5 L11 12 L7 8Z" fill="#22e04a" stroke="#117733" stroke-width="0.5"/></svg>
<div class="t" style="left:77px;top:558px;font-size:13px;letter-spacing:0.3px;color:#111">local_28</div>
<svg style="left:37px;top:579px" width="6" height="9" viewBox="0 0 6 9"><path d="M0 0V9L6 4.5Z" fill="#555"/></svg>
<svg style="left:50px;top:576px" width="16" height="16" viewBox="0 0 16 16"><path d="M1.5 2V13H7" stroke="#c020c0" stroke-width="2" fill="none"/><path d="M7 8 L7 10 L11 14 L11 12Z" fill="#1a6a5a"/><path d="M15.5 7.5 L15.5 9.5 L11 14 L11 12Z" fill="#111"/><path d="M11 2.5 L15.5 7.5 L11 12 L7 8Z" fill="#22e04a" stroke="#117733" stroke-width="0.5"/></svg>
<div class="t" style="left:77px;top:577px;font-size:13px;letter-spacing:0.3px;color:#111">local_2c</div>
<div style="left:1px;top:597px;width:157px;height:15px;background:#dfe1e4"></div>
<div style="left:18px;top:597px;width:123px;height:15px;background:linear-gradient(#a6a9ae,#c6c9ce 35%,#d6d9dd 75%,#d2d5d9);border-radius:0 7px 7px 0;box-shadow:inset -5px 0 4px -3px #3a3a3a"></div>
<div style="left:1px;top:597px;width:17px;height:15px;background:linear-gradient(#e8eaec,#f6f7f8)"></div>
<svg style="left:6px;top:600px" width="8" height="9" viewBox="0 0 8 9"><path d="M8 0V9L0 4.5Z" fill="#3a3a3a"/></svg>
<div style="left:141px;top:597px;width:17px;height:15px;background:linear-gradient(#e8eaec,#f6f7f8)"></div>
<svg style="left:145px;top:600px" width="8" height="9" viewBox="0 0 8 9"><path d="M0 0V9L8 4.5Z" fill="#3a3a3a"/></svg>
<div style="left:18px;top:597px;width:76px;height:15px;background:linear-gradient(#f4f8fb,#b9d0e2 30%,#cfe0ec 80%,#e6f0f6);border:1.5px solid #2c3c4a;border-top:none;border-radius:0 0 14px 14px"></div>
<div style="left:158px;top:597px;width:15px;height:15px;background:#d7d9dd"></div>
<div style="left:0px;top:612px;width:177px;height:2px;background:#6c6e72"></div>
<div style="left:0px;top:614px;width:177px;height:38px;background:linear-gradient(90deg,#c8c9cc,#dfe0e3 40%)"></div>
<div style="left:0px;top:651px;width:177px;height:1px;background:#a4a6aa"></div>
<div class="t" style="left:4px;top:625px;font-size:13px;letter-spacing:0.3px;color:#111">Filter:</div>
<div style="left:47px;top:621px;width:101px;height:23px;background:#fff;border:1px solid #9a9c9e"></div>
<svg style="left:155px;top:624px" width="16" height="16" viewBox="0 0 16 16"><path d="M1 1H11L15 5V15H1Z" fill="#e0ecf8" stroke="#4a80c0"/><path d="M4 8L8 5V11Z M9 5L13 8L9 11" fill="#3a7ad0"/></svg>
<div style="left:-2px;top:655px;width:179px;height:2px;background:#fafbfc"></div>
<div style="left:0px;top:657px;width:177px;height:200px;background:#d7d9dd;border:1px solid #8e9094"></div>
<div style="left:1px;top:658px;width:175px;height:23px;background:linear-gradient(90deg,#acadb0,#c6c7ca 22%,#d6d7da 45%,#dadbde)"></div>
<div style="left:1px;top:681px;width:175px;height:1px;background:#8e9094"></div>
<div style="left:1px;top:681px;width:175px;height:1px;background:#2a2a2a"></div>
<svg style="left:2px;top:661px" width="16" height="16" viewBox="0 0 16 16"><path d="M0.5 3H6L7 1.5H15.5V15H0.5Z" fill="#e8c15a" stroke="#7a5a10"/><text x="2.5" y="12.5" font-size="8" font-family="Liberation Sans" font-weight="bold" fill="#3a2a00">DT</text></svg>
<div class="t" style="left:21px;top:663px;font-size:13px;letter-spacing:0.3px;color:#151515">Data Type Man...</div>
<div style="left:130px;top:662px;width:1px;height:16px;background:#a9abae"></div>
<div style="left:131px;top:662px;width:1px;height:16px;background:#eef0f2"></div>
<svg style="left:138px;top:668px" width="9" height="5" viewBox="0 0 9 5"><path d="M0 0H9L4.5 5Z" fill="#111"/></svg>
<svg style="left:159px;top:665px" width="11" height="11" viewBox="0 0 11 11"><path d="M1 1L10 10M10 1L1 10" stroke="#000" stroke-width="2.6" stroke-linecap="butt"/></svg>
<div style="left:1px;top:682px;width:175px;height:45px;background:#d9dbdf"></div>
<svg style="left:2px;top:686px" width="16" height="16" viewBox="0 0 16 16"><path d="M0.5 8 L7 2 V5.5 H15.5 V10.5 H7 V14Z" fill="#9a9c9e"/></svg>
<svg style="left:25px;top:693px" width="9" height="5" viewBox="0 0 9 5"><path d="M0 0H9L4.5 5Z" fill="#9a9c9e"/></svg>
<svg style="left:37px;top:686px" width="16" height="16" viewBox="0 0 16 16"><path d="M15.5 8 L9 2 V5.5 H0.5 V10.5 H9 V14Z" fill="#9a9c9e"/></svg>
<svg style="left:60px;top:693px" width="9" height="5" viewBox="0 0 9 5"><path d="M0 0H9L4.5 5Z" fill="#9a9c9e"/></svg>
<div style="left:77px;top:686px;width:1px;height:16px;background:#a9abae"></div>
<div style="left:78px;top:686px;width:1px;height:16px;background:#eef0f2"></div>
<svg style="left:86px;top:686px" width="16" height="16" viewBox="0 0 16 16"><rect x="1" y="2" width="3" height="3" fill="#1a50e0"/><rect x="12" y="1" width="3" height="3" fill="#111" transform="rotate(45 13.5 2.5)"/><path d="M4 4 L8 6 V12 H11" stroke="#f08a20" stroke-width="1.5" fill="none"/><path d="M12 10L15 12.5L12 15L9 12.5Z" fill="#2aa02a"/><path d="M13 4L11 8" stroke="#111" stroke-width="0.8"/></svg>
<svg style="left:110px;top:693px" width="9" height="5" viewBox="0 0 9 5"><path d="M0 0H9L4.5 5Z" fill="#111"/></svg>
<div style="left:126px;top:686px;width:1px;height:16px;background:#a9abae"></div>
<div style="left:127px;top:686px;width:1px;height:16px;background:#eef0f2"></div>
<div style="left:132px;top:683px;width:20px;height:22px;background:#fff;border:1px solid #b0b2b6"></div>
<svg style="left:134px;top:686px" width="16" height="16" viewBox="0 0 16 16"><path d="M4 3H3V13H4M12 3H13V13H12" stroke="#333" stroke-width="1.5" fill="none"/><path d="M1 1L15 15" stroke="#c02020" stroke-width="1.8"/></svg>
<div style="left:154px;top:683px;width:21px;height:22px;background:#fff;border:1px solid #b0b2b6"></div>
<svg style="left:156px;top:686px" width="16" height="16" viewBox="0 0 16 16"><path d="M2 8 Q2 4 6 4 H14 V7 H9 V12 Q6 14 3 12Z" fill="#f49a3a" stroke="#8a4a10" stroke-width="0.8"/><path d="M1 1L15 15" stroke="#c02020" stroke-width="1.8"/></svg>
<div style="left:5px;top:708px;width:1px;height:16px;background:#a9abae"></div>
<div style="left:6px;top:708px;width:1px;height:16px;background:#eef0f2"></div>
<svg style="left:13px;top:708px" width="16" height="16" viewBox="0 0 16 16"><rect x="1" y="1" width="11" height="11" fill="#eef2f8" stroke="#6a7a8a"/><rect x="4" y="4" width="11" height="11" fill="#eef2f8" stroke="#6a7a8a"/><path d="M6.5 9.5H12.5" stroke="#2a4a8a" stroke-width="1.5"/></svg>
<div style="left:1px;top:727px;width:175px;height:4px;background:#d7d9dd"></div>
<div style="left:2px;top:731px;width:171px;height:130px;background:linear-gradient(90deg,#d2d3d6,#e6e7e9 12%,#f8f8f9 30%,#fff 45%);border:1px solid #a8aaae"></div>
<svg style="left:4px;top:740px" width="10" height="8" viewBox="0 0 10 8"><path d="M0 0H10L5 8Z" fill="#444"/></svg>
<svg style="left:19px;top:734px" width="22" height="18" viewBox="0 0 22 18"><rect x="3" y="4" width="3" height="10" fill="#c03020"/><rect x="7" y="2" width="3" height="12" fill="#2a7a9a"/><rect x="11" y="3" width="3" height="11" fill="#3a9a3a"/><rect x="15" y="5" width="3" height="9" fill="#d08020"/><path d="M0 14H22M2 14V17M20 14V17" stroke="#8a3a10" stroke-width="2"/></svg>
<div class="t" style="left:44px;top:736px;font-size:13px;letter-spacing:0.3px;color:#111">Data Types</div>
<svg style="left:22px;top:760px" width="6" height="9" viewBox="0 0 6 9"><path d="M0 0V9L6 4.5Z" fill="#555"/></svg>
<svg style="left:35px;top:756px" width="13" height="16" viewBox="0 0 13 16"><path d="M1 3 L4 0.5 H12 V13 L9 15.5 H1Z" fill="#f0902a" stroke="#9a4a00" stroke-width="0.8"/><path d="M4 5H8M4 8H8M4 11H8" stroke="#fff" stroke-width="1"/></svg>
<div class="t" style="left:60px;top:757px;font-size:13px;letter-spacing:0.3px;color:#111">BuiltInTypes</div>
<svg style="left:22px;top:781px" width="6" height="9" viewBox="0 0 6 9"><path d="M0 0V9L6 4.5Z" fill="#555"/></svg>
<svg style="left:35px;top:777px" width="13" height="16" viewBox="0 0 13 16"><path d="M1 3 L4 0.5 H12 V13 L9 15.5 H1Z" fill="#e83a3a" stroke="#8a1010" stroke-width="0.8"/><path d="M4 5H8M4 8H8M4 11H8" stroke="#fff" stroke-width="1"/></svg>
<svg style="left:50px;top:779px" width="10" height="10" viewBox="0 0 10 10"><circle cx="5" cy="5" r="4.5" fill="#3a7ab0"/><path d="M2.5 5 L4.5 7 L7.5 3" stroke="#fff" stroke-width="1.3" fill="none"/></svg>
<div class="t" style="left:59px;top:778px;font-size:13px;letter-spacing:0.3px;color:#111">whois</div>
<svg style="left:22px;top:802px" width="6" height="9" viewBox="0 0 6 9"><path d="M0 0V9L6 4.5Z" fill="#555"/></svg>
<svg style="left:35px;top:798px" width="13" height="16" viewBox="0 0 13 16"><path d="M1 3 L4 0.5 H12 V13 L9 15.5 H1Z" fill="#3aaa4a" stroke="#0a6a1a" stroke-width="0.8"/><path d="M4 5H8M4 8H8M4 11H8" stroke="#fff" stroke-width="1"/></svg>
<div class="t" style="left:60px;top:799px;font-size:13px;letter-spacing:0.3px;color:#111">generic_clib_64</div>
<div style="left:182px;top:128px;width:521px;height:2px;background:#fafbfc"></div>
<div style="left:182px;top:128px;width:2px;height:643px;background:#fafbfc"></div>
<div style="left:184px;top:130px;width:519px;height:641px;background:#d7d9dd;border:1px solid #8e9094"></div>
<div style="left:702px;top:130px;width:1px;height:641px;background:#d0d2d6"></div>
<div style="left:703px;top:130px;width:2px;height:641px;background:#6c6e72"></div>
<div style="left:184px;top:769px;width:519px;height:2px;background:#6c6e72"></div>
<div style="left:185px;top:131px;width:517px;height:22px;background:linear-gradient(90deg,#a6a6a6,#aaaaaa 45%,#c4c5c8 60%,#d2d3d6 70%)"></div>
<div style="left:185px;top:153px;width:517px;height:1px;background:#8e9094"></div>
<svg style="left:188px;top:135px" width="15" height="15" viewBox="0 0 15 15"><rect x="1" y="1" width="13" height="13" fill="#f4f8fc" stroke="#333"/><path d="M1 1V14" stroke="#111" stroke-width="2" stroke-dasharray="1.2 1"/><rect x="5" y="3" width="8" height="4" fill="#3a5aa0"/><rect x="5" y="8" width="8" height="4" fill="#9ac0d8"/></svg>
<div class="t" style="left:207px;top:136px;font-size:13px;letter-spacing:0.5px;color:#111">Listing:  whois - (7 addresses selected)</div>
<svg style="left:465px;top:135px" width="16" height="16" viewBox="0 0 16 16"><path d="M1 1H7L10 4V11H1Z" fill="#fafafa" stroke="#bbb" stroke-width="0.8"/><path d="M6 5H12L15 8V15H6Z" fill="#fafafa" stroke="#bbb" stroke-width="0.8"/></svg>
<svg style="left:487px;top:135px" width="16" height="16" viewBox="0 0 16 16"><rect x="1" y="2" width="10" height="13" rx="1" fill="#d89a4a" stroke="#9a6a2a"/><rect x="4" y="0.5" width="4" height="3" fill="#bbb"/><path d="M6 5H12L15.5 8.5V15.5H6Z" fill="#e0ecfa" stroke="#6a8ac0" stroke-width="0.8"/></svg>
<div style="left:512px;top:135px;width:1px;height:16px;background:#a9abae"></div>
<div style="left:513px;top:135px;width:1px;height:16px;background:#eef0f2"></div>
<div style="left:519px;top:131px;width:22px;height:22px;background:linear-gradient(#f8f8f8,#e8e9ea);border:1px solid #9a9c9e"></div>
<svg style="left:522px;top:134px" width="16" height="16" viewBox="0 0 16 16"><path d="M1 1V12L4 9L6.5 14L8.5 13L6 8H10Z" fill="#fff" stroke="#111" stroke-width="1"/><rect x="8" y="10" width="8" height="5" fill="#f0c040"/></svg>
<div style="left:546px;top:135px;width:1px;height:16px;background:#a9abae"></div>
<div style="left:547px;top:135px;width:1px;height:16px;background:#eef0f2"></div>
<svg style="left:555px;top:134px" width="16" height="16" viewBox="0 0 16 16"><rect x="0.5" y="1" width="15" height="3" fill="#fff" stroke="#333" stroke-width="0.8"/><rect x="0.5" y="5" width="15" height="3" fill="#fff" stroke="#333" stroke-width="0.8"/><rect x="6" y="5.3" width="5" height="2.4" fill="#f0a030"/><path d="M8 9V14M5.5 12L8 15L10.5 12" stroke="#222" stroke-width="1.3" fill="none"/></svg>
<svg style="left:577px;top:134px" width="16" height="16" viewBox="0 0 16 16"><path d="M1 1V15M3 3H6M3 6H6M3 9H6M3 12H6M10 3H14M10 6H14M10 9H14M10 12H14" stroke="#6a9ac0" stroke-width="1"/><path d="M4 13 L8 8 L11 10 L15 4" stroke="#3aa03a" stroke-width="2" fill="none"/></svg>
<div style="left:602px;top:135px;width:1px;height:16px;background:#a9abae"></div>
<div style="left:603px;top:135px;width:1px;height:16px;background:#eef0f2"></div>
<svg style="left:611px;top:135px" width="16" height="16" viewBox="0 0 16 16"><rect x="0.5" y="4" width="15" height="11" rx="2" fill="#2a2a2a"/><rect x="4" y="1" width="8" height="4" fill="#2a2a2a" stroke="#555"/><circle cx="8" cy="9.5" r="3.5" fill="#666" stroke="#111"/></svg>
<div style="left:636px;top:135px;width:1px;height:16px;background:#a9abae"></div>
<div style="left:637px;top:135px;width:1px;height:16px;background:#eef0f2"></div>
<svg style="left:644px;top:134px" width="16" height="16" viewBox="0 0 16 16"><rect x="1" y="1.5" width="11" height="13" fill="#f4f6f8" stroke="#555" stroke-dasharray="1 1"/><rect x="3" y="5" width="8" height="5" fill="#6a8ab0"/><rect x="11" y="0.5" width="4.5" height="15" fill="#f0b040" stroke="#9a6a10" stroke-width="0.8"/></svg>
<svg style="left:667px;top:141px" width="9" height="5" viewBox="0 0 9 5"><path d="M0 0H9L4.5 5Z" fill="#111"/></svg>
<div style="left:679px;top:135px;width:1px;height:16px;background:#a9abae"></div>
<div style="left:680px;top:135px;width:1px;height:16px;background:#eef0f2"></div>
<svg style="left:686px;top:137px" width="11" height="11" viewBox="0 0 11 11"><path d="M1 1L10 10M10 1L1 10" stroke="#000" stroke-width="2.6" stroke-linecap="butt"/></svg>
<div style="left:185px;top:154px;width:517px;height:615px;background:#d7d9dd"></div>
<div style="left:185px;top:154px;width:15px;height:615px;background:#d4d6da"></div>
<div style="left:191px;top:157px;width:3px;height:594px;background:#2e2e2e"></div>
<div style="left:200px;top:154px;width:70px;height:615px;background:#fff"></div>
<div style="left:270px;top:154px;width:6px;height:615px;background:#d0d2d6"></div>
<div style="left:276px;top:156px;width:1px;height:613px;background:#8e9094"></div>
<div style="left:276px;top:156px;width:426px;height:1px;background:#8e9094"></div>
<svg style="left:185px;top:455px" width="15" height="9" viewBox="0 0 15 9"><path d="M0 4.5H10" stroke="#111" stroke-width="1.5"/><path d="M9 0L15 4.5L9 9Z" fill="#111"/></svg>
<div style="left:271px;top:452px;width:4px;height:14px;background:#e8e9ea;border:1px solid #9a9c9e;border-radius:2px"></div>
<svg style="left:254px;top:744px" width="15" height="7" viewBox="0 0 15 7"><path d="M0 0H9L4.5 5Z" fill="#888"/><path d="M10 5H14" stroke="#888"/></svg>
<div style="left:277px;top:157px;width:392px;height:594px;overflow:hidden;background:#fff">
<div style="left:0;top:297px;width:392px;height:33px;background:#b6f5b8"></div>
<div style="left:57px;top:298px;width:2px;height:14px;background:#d08070"></div>
<div class="m" style="left:89px;top:-6px"><span style="color:#8f3f8f">undefined8</span></div>
<div class="m" style="left:217px;top:-6px"><span style="color:#8f3f8f">Stack[-0x10]:8 local_10</span></div>
<div class="m" style="left:89px;top:10px"><span style="color:#8f3f8f">undefined4</span></div>
<div class="m" style="left:217px;top:10px"><span style="color:#8f3f8f">Stack[-0x1c]:4 local_1c</span></div>
<div class="m" style="left:89px;top:42px"><span style="color:#8f3f8f">undefined1</span></div>
<div class="m" style="left:217px;top:42px"><span style="color:#8f3f8f">Stack[-0x28]:1 local_28</span></div>
<div class="m" style="left:89px;top:74px"><span style="color:#8f3f8f">undefined4</span></div>
<div class="m" style="left:217px;top:74px"><span style="color:#8f3f8f">Stack[-0x2c]:4 local_2c</span></div>
<div class="m" style="left:89px;top:90px"><span style="color:#8f3f8f">undefined8</span></div>
<div class="m" style="left:217px;top:90px"><span style="color:#8f3f8f">Stack[-0x34]:8 local_34</span></div>
<div class="m" style="left:200px;top:122px"><span style="color:#cc33cc">main</span></div>
<div class="m" style="left:56.5px;top:170px"><span style="color:#111">00101175</span></div>
<div class="m" style="left:119.5px;top:170px"><span style="color:#2a2ab2">55</span></div>
<div class="m" style="left:229.5px;top:170px"><span style="color:#1c1c80">PUSH</span></div>
<div class="m" style="left:309.5px;top:170px"><span style="color:#9a9a44">RBP</span></div>
<div class="m" style="left:56.5px;top:186px"><span style="color:#111">00101176</span></div>
<div class="m" style="left:119.5px;top:186px"><span style="color:#2a2ab2">48 89 e5</span></div>
<div class="m" style="left:229.5px;top:186px"><span style="color:#1c1c80">MOV</span></div>
<div class="m" style="left:309.5px;top:186px"><span style="color:#9a9a44">RBP</span><span style="color:#111">,</span><span style="color:#9a9a44">RSP</span></div>
<div class="m" style="left:56.5px;top:202px"><span style="color:#111">00101179</span></div>
<div class="m" style="left:119.5px;top:202px"><span style="color:#2a2ab2">53</span></div>
<div class="m" style="left:229.5px;top:202px"><span style="color:#1c1c80">PUSH</span></div>
<div class="m" style="left:309.5px;top:202px"><span style="color:#9a9a44">RBX</span></div>
<div class="m" style="left:56.5px;top:218px"><span style="color:#111">0010117a</span></div>
<div class="m" style="left:119.5px;top:218px"><span style="color:#2a2ab2">48 83 ec 28</span></div>
<div class="m" style="left:229.5px;top:218px"><span style="color:#1c1c80">SUB</span></div>
<div class="m" style="left:309.5px;top:218px"><span style="color:#9a9a44">RSP</span><span style="color:#111">,</span><span style="color:#2f8a62">0x28</span></div>
<div class="m" style="left:56.5px;top:234px"><span style="color:#111">0010117e</span></div>
<div class="m" style="left:119.5px;top:234px"><span style="color:#2a2ab2">48 b8 5b</span></div>
<div class="m" style="left:229.5px;top:234px"><span style="color:#1c1c80">MOV</span></div>
<div class="m" style="left:309.5px;top:234px"><span style="color:#9a9a44">RAX</span><span style="color:#111">,</span><span style="color:#2f8a62">0x5e415d415d415d5b</span></div>
<div class="m" style="left:119.5px;top:250px"><span style="color:#2a2ab2">5d 41 5d</span></div>
<div class="m" style="left:119.5px;top:266px"><span style="color:#2a2ab2">41 5d 41 5e</span></div>
<div class="m" style="left:56.5px;top:282px"><span style="color:#111">00101188</span></div>
<div class="m" style="left:119.5px;top:282px"><span style="color:#2a2ab2">48 89 45 d4</span></div>
<div class="m" style="left:229.5px;top:282px"><span style="color:#1c1c80">MOV</span></div>
<div class="m" style="left:309.5px;top:282px"><span style="color:#111">qword ptr [</span><span style="color:#9a9a44">RBP + local_34]</span></div>
<div class="m" style="left:56.5px;top:298px"><span style="color:#111">0010118c</span></div>
<div class="m" style="left:119.5px;top:298px"><span style="color:#2a2ab2">c7 45 dc</span></div>
<div class="m" style="left:229.5px;top:298px"><span style="color:#1c1c80">MOV</span></div>
<div class="m" style="left:309.5px;top:298px"><span style="color:#111">dword ptr [</span><span style="color:#9a9a44">RBP + local_2c]</span></div>
<div class="m" style="left:119.5px;top:314px"><span style="color:#2a2ab2">41 5f 41 00</span></div>
<div class="m" style="left:56.5px;top:330px"><span style="color:#111">00101193</span></div>
<div class="m" style="left:119.5px;top:330px"><span style="color:#2a2ab2">48 8b 15</span></div>
<div class="m" style="left:229.5px;top:330px"><span style="color:#1c1c80">MOV</span></div>
<div class="m" style="left:309.5px;top:330px"><span style="color:#9a9a44">RDX</span><span style="color:#111">,qword ptr [stdin]</span></div>
<div class="m" style="left:119.5px;top:346px"><span style="color:#2a2ab2">b6 2e 00 00</span></div>
<div class="m" style="left:56.5px;top:362px"><span style="color:#111">0010119a</span></div>
<div class="m" style="left:119.5px;top:362px"><span style="color:#2a2ab2">48 8d 45 e0</span></div>
<div class="m" style="left:229.5px;top:362px"><span style="color:#1c1c80">LEA</span></div>
<div class="m" style="left:309.5px;top:362px"><span style="color:#9a9a44">RAX=&gt;</span><span style="color:#8f3f8f">local_28</span></div>
<div class="m" style="left:56.5px;top:378px"><span style="color:#111">0010119e</span></div>
<div class="m" style="left:119.5px;top:378px"><span style="color:#2a2ab2">be 0c 00</span></div>
<div class="m" style="left:229.5px;top:378px"><span style="color:#1c1c80">MOV</span></div>
<div class="m" style="left:309.5px;top:378px"><span style="color:#9a9a44">ESI</span><span style="color:#111">,</span><span style="color:#2f8a62">0xc</span></div>
<div class="m" style="left:119.5px;top:394px"><span style="color:#2a2ab2">00 00</span></div>
<div class="m" style="left:56.5px;top:410px"><span style="color:#111">001011a3</span></div>
<div class="m" style="left:119.5px;top:410px"><span style="color:#2a2ab2">48 89 c7</span></div>
<div class="m" style="left:229.5px;top:410px"><span style="color:#1c1c80">MOV</span></div>
<div class="m" style="left:309.5px;top:410px"><span style="color:#9a9a44">RDI</span><span style="color:#111">,</span><span style="color:#9a9a44">RAX</span></div>
<div class="m" style="left:56.5px;top:426px"><span style="color:#111">001011a6</span></div>
<div class="m" style="left:119.5px;top:426px"><span style="color:#2a2ab2">e8 a5 fe</span></div>
<div class="m" style="left:229.5px;top:426px"><span style="color:#1c1c80">CALL</span></div>
<div class="m" style="left:309.5px;top:426px"><span style="color:#2a2ac8">fgets</span></div>
<div class="m" style="left:119.5px;top:442px"><span style="color:#2a2ab2">ff ff</span></div>
<div class="m" style="left:56.5px;top:458px"><span style="color:#111">001011ab</span></div>
<div class="m" style="left:119.5px;top:458px"><span style="color:#2a2ab2">48 8d 55 d4</span></div>
<div class="m" style="left:229.5px;top:458px"><span style="color:#1c1c80">LEA</span></div>
<div class="m" style="left:309.5px;top:458px"><span style="color:#9a9a44">RDX=&gt;</span><span style="color:#8f3f8f">local_34</span></div>
<div class="m" style="left:56.5px;top:474px"><span style="color:#111">001011af</span></div>
<div class="m" style="left:119.5px;top:474px"><span style="color:#2a2ab2">48 8d 45 e0</span></div>
<div class="m" style="left:229.5px;top:474px"><span style="color:#1c1c80">LEA</span></div>
<div class="m" style="left:309.5px;top:474px"><span style="color:#9a9a44">RAX=&gt;</span><span style="color:#8f3f8f">local_28</span></div>
<div class="m" style="left:56.5px;top:490px"><span style="color:#111">001011b3</span></div>
<div class="m" style="left:119.5px;top:490px"><span style="color:#2a2ab2">48 89 d6</span></div>
<div class="m" style="left:229.5px;top:490px"><span style="color:#1c1c80">MOV</span></div>
<div class="m" style="left:309.5px;top:490px"><span style="color:#9a9a44">RSI</span><span style="color:#111">,</span><span style="color:#9a9a44">RDX</span></div>
<div class="m" style="left:56.5px;top:506px"><span style="color:#111">001011b6</span></div>
<div class="m" style="left:119.5px;top:506px"><span style="color:#2a2ab2">48 89 c7</span></div>
<div class="m" style="left:229.5px;top:506px"><span style="color:#1c1c80">MOV</span></div>
<div class="m" style="left:309.5px;top:506px"><span style="color:#9a9a44">RDI</span><span style="color:#111">,</span><span style="color:#9a9a44">RAX</span></div>
<div class="m" style="left:56.5px;top:522px"><span style="color:#111">001011b9</span></div>
<div class="m" style="left:119.5px;top:522px"><span style="color:#2a2ab2">e8 a2 fe</span></div>
<div class="m" style="left:229.5px;top:522px"><span style="color:#1c1c80">CALL</span></div>
<div class="m" style="left:309.5px;top:522px"><span style="color:#2a2ac8">strcmp</span></div>
<div class="m" style="left:119.5px;top:538px"><span style="color:#2a2ab2">ff ff</span></div>
<div class="m" style="left:56.5px;top:554px"><span style="color:#111">001011be</span></div>
<div class="m" style="left:119.5px;top:554px"><span style="color:#2a2ab2">89 45 ec</span></div>
<div class="m" style="left:229.5px;top:554px"><span style="color:#1c1c80">MOV</span></div>
<div class="m" style="left:309.5px;top:554px"><span style="color:#111">dword ptr [</span><span style="color:#9a9a44">RBP + local_1c]</span></div>
<div class="m" style="left:56.5px;top:570px"><span style="color:#111">001011c1</span></div>
<div class="m" style="left:119.5px;top:570px"><span style="color:#2a2ab2">83 7d ec 00</span></div>
<div class="m" style="left:229.5px;top:570px"><span style="color:#1c1c80">CMP</span></div>
<div class="m" style="left:309.5px;top:570px"><span style="color:#111">dword ptr [</span><span style="color:#9a9a44">RBP + local_1c],0x0</span></div>
<div class="m" style="left:56.5px;top:586px"><span style="color:#111">001011c5</span></div>
<div class="m" style="left:119.5px;top:586px"><span style="color:#2a2ab2">75 35</span></div>
<div class="m" style="left:229.5px;top:586px"><span style="color:#1c1c80">JNZ</span></div>
<div class="m" style="left:309.5px;top:586px"><span style="color:#111">LAB_001011fc</span></div>
</div>
<div style="left:669px;top:157px;width:15px;height:594px;background:#dfe1e4"></div>
<div style="left:669px;top:172px;width:15px;height:561px;background:linear-gradient(90deg,#a6a9ae,#c6c9ce 35%,#d6d9dd 75%,#d2d5d9);border-radius:0 0 7px 7px;box-shadow:inset 0 -5px 4px -3px #3a3a3a"></div>
<div style="left:669px;top:157px;width:15px;height:17px;background:linear-gradient(90deg,#e8eaec,#f6f7f8)"></div>
<svg style="left:672px;top:162px" width="9" height="8" viewBox="0 0 9 8"><path d="M0 8H9L4.5 0Z" fill="#3a3a3a"/></svg>
<div style="left:669px;top:733px;width:15px;height:18px;background:linear-gradient(90deg,#e8eaec,#f6f7f8)"></div>
<svg style="left:672px;top:739px" width="9" height="8" viewBox="0 0 9 8"><path d="M0 0H9L4.5 8Z" fill="#3a3a3a"/></svg>
<div style="left:669px;top:337px;width:15px;height:30px;background:linear-gradient(90deg,#f4f8fb,#b9d0e2 30%,#cfe0ec 80%,#e6f0f6);border:1.5px solid #2c3c4a;border-left:none;border-radius:0 15px 15px 0"></div>
<div style="left:684px;top:157px;width:16px;height:594px;background:#d2d5da"></div>
<div style="left:700px;top:157px;width:2px;height:594px;background:#d0d2d6"></div>
<div style="left:691px;top:272px;width:9px;height:8px;background:#353535"></div>
<div style="left:691px;top:282px;width:9px;height:33px;background:#353535"></div>
<div style="left:691px;top:317px;width:9px;height:26px;background:#353535"></div>
<div style="left:691px;top:345px;width:9px;height:34px;background:#353535"></div>
<div style="left:691px;top:381px;width:9px;height:83px;background:#353535"></div>
<div style="left:684px;top:353px;width:7px;height:4px;background:#dde2e6"></div>
<div style="left:691px;top:353px;width:9px;height:4px;background:#8ae88a"></div>
<div style="left:691px;top:506px;width:9px;height:4px;background:#353535"></div>
<div style="left:691px;top:511px;width:9px;height:6px;background:#353535"></div>
<div style="left:691px;top:518px;width:9px;height:4px;background:#353535"></div>
<div style="left:691px;top:523px;width:9px;height:4px;background:#353535"></div>
<div style="left:691px;top:528px;width:9px;height:8px;background:#353535"></div>
<div style="left:684px;top:506px;width:10px;height:6px;background:#f2c65a"></div>
<div style="left:277px;top:751px;width:392px;height:15px;background:#dfe1e4"></div>
<div style="left:294px;top:751px;width:358px;height:15px;background:linear-gradient(#a6a9ae,#c6c9ce 35%,#d6d9dd 75%,#d2d5d9);border-radius:0 7px 7px 0;box-shadow:inset -5px 0 4px -3px #3a3a3a"></div>
<div style="left:277px;top:751px;width:17px;height:15px;background:linear-gradient(#e8eaec,#f6f7f8)"></div>
<svg style="left:282px;top:754px" width="8" height="9" viewBox="0 0 8 9"><path d="M8 0V9L0 4.5Z" fill="#3a3a3a"/></svg>
<div style="left:652px;top:751px;width:17px;height:15px;background:linear-gradient(#e8eaec,#f6f7f8)"></div>
<svg style="left:656px;top:754px" width="8" height="9" viewBox="0 0 8 9"><path d="M0 0V9L8 4.5Z" fill="#3a3a3a"/></svg>
<div style="left:294px;top:751px;width:135px;height:15px;background:linear-gradient(#f4f8fb,#b9d0e2 30%,#cfe0ec 80%,#e6f0f6);border:1.5px solid #2c3c4a;border-top:none;border-radius:0 0 14px 14px"></div>
<div style="left:669px;top:751px;width:31px;height:15px;background:#cfd2d6"></div>
<div style="left:709px;top:128px;width:563px;height:2px;background:#fafbfc"></div>
<div style="left:709px;top:128px;width:2px;height:643px;background:#fafbfc"></div>
<div style="left:711px;top:130px;width:561px;height:641px;background:#d7d9dd;border:1px solid #8e9094"></div>
<div style="left:711px;top:769px;width:561px;height:2px;background:#6c6e72"></div>
<div style="left:712px;top:131px;width:559px;height:22px;background:linear-gradient(90deg,#262a8c,#3a3e94 20%,#7a7cae 50%,#b8b9d0 68%,#d4d5da 80%)"></div>
<div style="left:712px;top:153px;width:559px;height:1px;background:#8e9094"></div>
<svg style="left:715px;top:134px" width="17" height="17" viewBox="0 0 17 17"><path d="M11.5 4 A5 5 0 1 0 11.5 11" stroke="#3a7ef0" stroke-width="3.2" fill="none"/><path d="M14.5 9.5 Q13.5 8.5 12.8 10 L11.8 15 Q11.3 16.5 10 16" stroke="#e020c0" stroke-width="1.4" fill="none"/><path d="M10.5 12H14" stroke="#e020c0" stroke-width="1.1"/></svg>
<div class="t" style="left:733px;top:136px;font-size:13px;letter-spacing:0.45px;color:#fff">Decompile: main -  (whois)</div>
<svg style="left:1105px;top:134px" width="17" height="17" viewBox="0 0 17 17"><path d="M3 8 A5 5 0 0 1 12 5" stroke="#1a9a2a" stroke-width="2.8" fill="none"/><path d="M10 1L15 5L9 8Z" fill="#1a9a2a"/><path d="M13 9 A5 5 0 0 1 4 12" stroke="#2aba3a" stroke-width="2.8" fill="none"/><path d="M6 16L1 12L7 9Z" fill="#2aba3a"/></svg>
<div style="left:1130px;top:135px;width:1px;height:16px;background:#a9abae"></div>
<div style="left:1131px;top:135px;width:1px;height:16px;background:#eef0f2"></div>
<svg style="left:1139px;top:135px" width="16" height="16" viewBox="0 0 16 16"><path d="M1 1H7L10 4V11H1Z" fill="#fafafa" stroke="#bbb" stroke-width="0.8"/><path d="M6 5H12L15 8V15H6Z" fill="#fafafa" stroke="#bbb" stroke-width="0.8"/></svg>
<div style="left:1164px;top:135px;width:1px;height:16px;background:#a9abae"></div>
<div style="left:1165px;top:135px;width:1px;height:16px;background:#eef0f2"></div>
<svg style="left:1173px;top:134px" width="16" height="16" viewBox="0 0 16 16"><rect x="0.5" y="1" width="14" height="14" fill="#bcd6f0" stroke="#4a7ac0"/><path d="M4 12 L13 2 L15 4 L6 14 L3 15Z" fill="#f0b040" stroke="#8a5a10" stroke-width="0.8"/></svg>
<div style="left:1198px;top:135px;width:1px;height:16px;background:#a9abae"></div>
<div style="left:1199px;top:135px;width:1px;height:16px;background:#eef0f2"></div>
<svg style="left:1206px;top:135px" width="16" height="16" viewBox="0 0 16 16"><rect x="0.5" y="4" width="15" height="11" rx="2" fill="#2a2a2a"/><rect x="4" y="1" width="8" height="4" fill="#2a2a2a" stroke="#555"/><circle cx="8" cy="9.5" r="3.5" fill="#666" stroke="#111"/></svg>
<div style="left:1227px;top:135px;width:1px;height:16px;background:#a9abae"></div>
<div style="left:1228px;top:135px;width:1px;height:16px;background:#eef0f2"></div>
<svg style="left:1233px;top:139px" width="11" height="6" viewBox="0 0 11 6"><path d="M0 0H11L5.5 6Z" fill="#111"/></svg>
<svg style="left:1255px;top:137px" width="11" height="11" viewBox="0 0 11 11"><path d="M1 1L10 10M10 1L1 10" stroke="#000" stroke-width="2.6" stroke-linecap="butt"/></svg>
<div style="left:712px;top:154px;width:559px;height:615px;background:#d7d9dd"></div>
<div style="left:714px;top:157px;width:557px;height:594px;background:#fff"></div>
<div style="left:714px;top:157px;width:21px;height:594px;background:#fff"></div>
<div style="left:735px;top:157px;width:1px;height:381px;background:#9a9c9e"></div>
<div style="left:714px;top:157px;width:557px;height:594px;overflow:hidden">
<div class="m" style="left:24px;top:1px"></div>
<div class="m mr" style="left:-30px;top:1px;width:44px;text-align:right;color:#6a6a6a">1</div>
<div class="m" style="left:24px;top:17px"><span style="color:#2346a6">undefined8</span><span style="color:#111"> </span><span style="color:#1b1b9c">main</span><span style="color:#111">(</span><span style="color:#2346a6">void</span><span style="color:#111">)</span></div>
<div class="m mr" style="left:-30px;top:17px;width:44px;text-align:right;color:#6a6a6a">2</div>
<div class="m" style="left:24px;top:33px"></div>
<div class="m mr" style="left:-30px;top:33px;width:44px;text-align:right;color:#6a6a6a">3</div>
<div class="m" style="left:24px;top:49px"><span style="color:#111">{</span></div>
<div class="m mr" style="left:-30px;top:49px;width:44px;text-align:right;color:#6a6a6a">4</div>
<div class="m" style="left:24px;top:65px"><span style="color:#111">  </span><span style="color:#2346a6">__uid_t</span><span style="color:#111"> </span><span style="color:#8e8e44">__euid</span><span style="color:#111">;</span></div>
<div class="m mr" style="left:-30px;top:65px;width:44px;text-align:right;color:#6a6a6a">5</div>
<div class="m" style="left:24px;top:81px"><span style="color:#111">  </span><span style="color:#2346a6">__uid_t</span><span style="color:#111"> </span><span style="color:#8e8e44">__ruid</span><span style="color:#111">;</span></div>
<div class="m mr" style="left:-30px;top:81px;width:44px;text-align:right;color:#6a6a6a">6</div>
<div class="m" style="left:24px;top:97px"><span style="color:#111">  </span><span style="color:#2346a6">undefined8</span><span style="color:#111"> </span><span style="color:#8e8e44">local_34</span><span style="color:#111">;</span></div>
<div class="m mr" style="left:-30px;top:97px;width:44px;text-align:right;color:#6a6a6a">7</div>
<div class="m" style="left:24px;top:113px"><span style="color:#111">  </span><span style="color:#2346a6">undefined4</span><span style="color:#111"> </span><span style="color:#8e8e44">local_2c</span><span style="color:#111">;</span></div>
<div class="m mr" style="left:-30px;top:113px;width:44px;text-align:right;color:#6a6a6a">8</div>
<div class="m" style="left:24px;top:129px"><span style="color:#111">  </span><span style="color:#2346a6">char</span><span style="color:#111"> </span><span style="color:#8e8e44">local_28</span><span style="color:#111"> [</span><span style="color:#2e8a3e">12</span><span style="color:#111">];</span></div>
<div class="m mr" style="left:-30px;top:129px;width:44px;text-align:right;color:#6a6a6a">9</div>
<div class="m" style="left:24px;top:145px"><span style="color:#111">  </span><span style="color:#2346a6">int</span><span style="color:#111"> </span><span style="color:#8e8e44">local_1c</span><span style="color:#111">;</span></div>
<div class="m mr" style="left:-30px;top:145px;width:44px;text-align:right;color:#6a6a6a">10</div>
<div class="m" style="left:24px;top:161px"></div>
<div class="m mr" style="left:-30px;top:161px;width:44px;text-align:right;color:#6a6a6a">11</div>
<div class="m" style="left:24px;top:177px"><span style="color:#111">  </span><span style="color:#8e8e44">local_34</span><span style="color:#111"> = </span><span style="color:#2e8a3e">0x5e415d415d415d5b</span><span style="color:#111">;</span></div>
<div class="m mr" style="left:-30px;top:177px;width:44px;text-align:right;color:#6a6a6a">12</div>
<div class="m" style="left:24px;top:193px"><span style="color:#111">  </span><span style="color:#8e8e44">local_2c</span><span style="color:#111"> = </span><span style="background:#ccf06a;color:#2e8a3e">0x415f41</span><span style="color:#111">;</span></div>
<div class="m mr" style="left:-30px;top:193px;width:44px;text-align:right;color:#6a6a6a">13</div>
<div class="m" style="left:24px;top:209px"><span style="color:#111">  </span><span style="color:#1b1b9c">fgets</span><span style="color:#111">(</span><span style="color:#8e8e44">local_28</span><span style="color:#111">,</span><span style="color:#2e8a3e">0xc</span><span style="color:#111">,</span><span style="color:#2a8a8a">stdin</span><span style="color:#111">);</span></div>
<div class="m mr" style="left:-30px;top:209px;width:44px;text-align:right;color:#6a6a6a">14</div>
<div class="m" style="left:24px;top:225px"><span style="color:#111">  </span><span style="color:#8e8e44">local_1c</span><span style="color:#111"> = </span><span style="color:#1b1b9c">strcmp</span><span style="color:#111">(</span><span style="color:#8e8e44">local_28</span><span style="color:#111">,(</span><span style="color:#2346a6">char</span><span style="color:#111"> *)&amp;</span><span style="color:#8e8e44">local_34</span><span style="color:#111">);</span></div>
<div class="m mr" style="left:-30px;top:225px;width:44px;text-align:right;color:#6a6a6a">15</div>
<div class="m" style="left:24px;top:241px"><span style="color:#111">  </span><span style="color:#1b1b9c">if</span><span style="color:#111"> (</span><span style="color:#8e8e44">local_1c</span><span style="color:#111"> == </span><span style="color:#2e8a3e">0</span><span style="color:#111">) {</span></div>
<div class="m mr" style="left:-30px;top:241px;width:44px;text-align:right;color:#6a6a6a">16</div>
<div class="m" style="left:24px;top:257px"><span style="color:#111">    </span><span style="color:#8e8e44">__euid</span><span style="color:#111"> = </span><span style="color:#1b1b9c">geteuid</span><span style="color:#111">();</span></div>
<div class="m mr" style="left:-30px;top:257px;width:44px;text-align:right;color:#6a6a6a">17</div>
<div class="m" style="left:24px;top:273px"><span style="color:#111">    </span><span style="color:#8e8e44">__ruid</span><span style="color:#111"> = </span><span style="color:#1b1b9c">geteuid</span><span style="color:#111">();</span></div>
<div class="m mr" style="left:-30px;top:273px;width:44px;text-align:right;color:#6a6a6a">18</div>
<div class="m" style="left:24px;top:289px"><span style="color:#111">    </span><span style="color:#1b1b9c">setreuid</span><span style="color:#111">(</span><span style="color:#8e8e44">__ruid</span><span style="color:#111">,</span><span style="color:#8e8e44">__euid</span><span style="color:#111">);</span></div>
<div class="m mr" style="left:-30px;top:289px;width:44px;text-align:right;color:#6a6a6a">19</div>
<div class="m" style="left:24px;top:305px"><span style="color:#111">    </span><span style="color:#1b1b9c">system</span><span style="color:#111">(</span><span style="color:#1b4a9c">"/bin/bash"</span><span style="color:#111">);</span></div>
<div class="m mr" style="left:-30px;top:305px;width:44px;text-align:right;color:#6a6a6a">20</div>
<div class="m" style="left:24px;top:321px"><span style="color:#111">  }</span></div>
<div class="m mr" style="left:-30px;top:321px;width:44px;text-align:right;color:#6a6a6a">21</div>
<div class="m" style="left:24px;top:337px"><span style="color:#111">  </span><span style="color:#1b1b9c">return</span><span style="color:#111"> </span><span style="color:#2e8a3e">0</span><span style="color:#111">;</span></div>
<div class="m mr" style="left:-30px;top:337px;width:44px;text-align:right;color:#6a6a6a">22</div>
<div class="m" style="left:24px;top:353px"><span style="color:#111">}</span></div>
<div class="m mr" style="left:-30px;top:353px;width:44px;text-align:right;color:#6a6a6a">23</div>
<div class="m" style="left:24px;top:369px"></div>
<div class="m mr" style="left:-30px;top:369px;width:44px;text-align:right;color:#6a6a6a">24</div>
</div>
<div style="left:829px;top:350px;width:2px;height:15px;background:#c02a10"></div>
<div style="left:712px;top:751px;width:557px;height:15px;background:#dfe1e4"></div>
<div style="left:729px;top:751px;width:523px;height:15px;background:linear-gradient(#a6a9ae,#c6c9ce 35%,#d6d9dd 75%,#d2d5d9);border-radius:0 7px 7px 0;box-shadow:inset -5px 0 4px -3px #3a3a3a"></div>
<div style="left:712px;top:751px;width:17px;height:15px;background:linear-gradient(#e8eaec,#f6f7f8)"></div>
<svg style="left:717px;top:754px" width="8" height="9" viewBox="0 0 8 9"><path d="M8 0V9L0 4.5Z" fill="#3a3a3a"/></svg>
<div style="left:1252px;top:751px;width:17px;height:15px;background:linear-gradient(#e8eaec,#f6f7f8)"></div>
<svg style="left:1256px;top:754px" width="8" height="9" viewBox="0 0 8 9"><path d="M0 0V9L8 4.5Z" fill="#3a3a3a"/></svg>
<div style="left:731px;top:751px;width:402px;height:15px;background:linear-gradient(#f4f8fb,#b9d0e2 30%,#cfe0ec 80%,#e6f0f6);border:1.5px solid #2c3c4a;border-top:none;border-radius:0 0 14px 14px"></div>
<div style="left:182px;top:775px;width:1091px;height:2px;background:#fafbfc"></div>
<div style="left:182px;top:775px;width:2px;height:82px;background:#fafbfc"></div>
<div style="left:184px;top:777px;width:1089px;height:80px;background:#d7d9dd;border:1px solid #8e9094"></div>
<div style="left:185px;top:778px;width:1087px;height:22px;background:linear-gradient(90deg,#9c9c9c,#a8a8a8 40%,#c4c5c8 75%,#d2d3d6 90%)"></div>
<div style="left:185px;top:800px;width:1087px;height:1px;background:#8e9094"></div>
<svg style="left:187px;top:781px" width="15" height="15" viewBox="0 0 15 15"><rect x="0.5" y="0.5" width="14" height="10" fill="#4a8ad8" stroke="#6a7a8a"/><rect x="2" y="2" width="11" height="7" fill="#9ac8f4"/><path d="M7.5 11V13M3 14H12" stroke="#888" stroke-width="1.5"/></svg>
<div class="t" style="left:207px;top:782px;font-size:13px;letter-spacing:0.4px;color:#111">Console - Scripting</div>
<svg style="left:1208px;top:782px" width="15" height="16" viewBox="0 0 15 16"><path d="M3 7V5 A4.5 4.5 0 0 1 12 5 V7" stroke="#8a8a8a" stroke-width="1.8" fill="none"/><rect x="0.5" y="7" width="14" height="8" fill="#f0d070" stroke="#b08a20"/><rect x="5" y="9.5" width="5" height="3" fill="#b08a20"/></svg>
<svg style="left:1229px;top:781px" width="16" height="16" viewBox="0 0 16 16"><path d="M4 10 L11 1 L15 4 L8 13Z" fill="#f0d040" stroke="#222" stroke-width="0.9"/><path d="M2 13 A3 3 0 0 1 4 9 L8 12 A3 3 0 0 1 4 15Z" fill="#f0a0b0" stroke="#a04060" stroke-width="0.8"/></svg>
<div style="left:1249px;top:781px;width:1px;height:16px;background:#a9abae"></div>
<div style="left:1250px;top:781px;width:1px;height:16px;background:#eef0f2"></div>
<svg style="left:1256px;top:784px" width="11" height="11" viewBox="0 0 11 11"><path d="M1 1L10 10M10 1L1 10" stroke="#000" stroke-width="2.6" stroke-linecap="butt"/></svg>
<div style="left:185px;top:801px;width:1087px;height:2px;background:#d7d9dd"></div>
<div style="left:186px;top:803px;width:1085px;height:60px;background:#fff;border:1px solid #8e9094"></div></body></html>
